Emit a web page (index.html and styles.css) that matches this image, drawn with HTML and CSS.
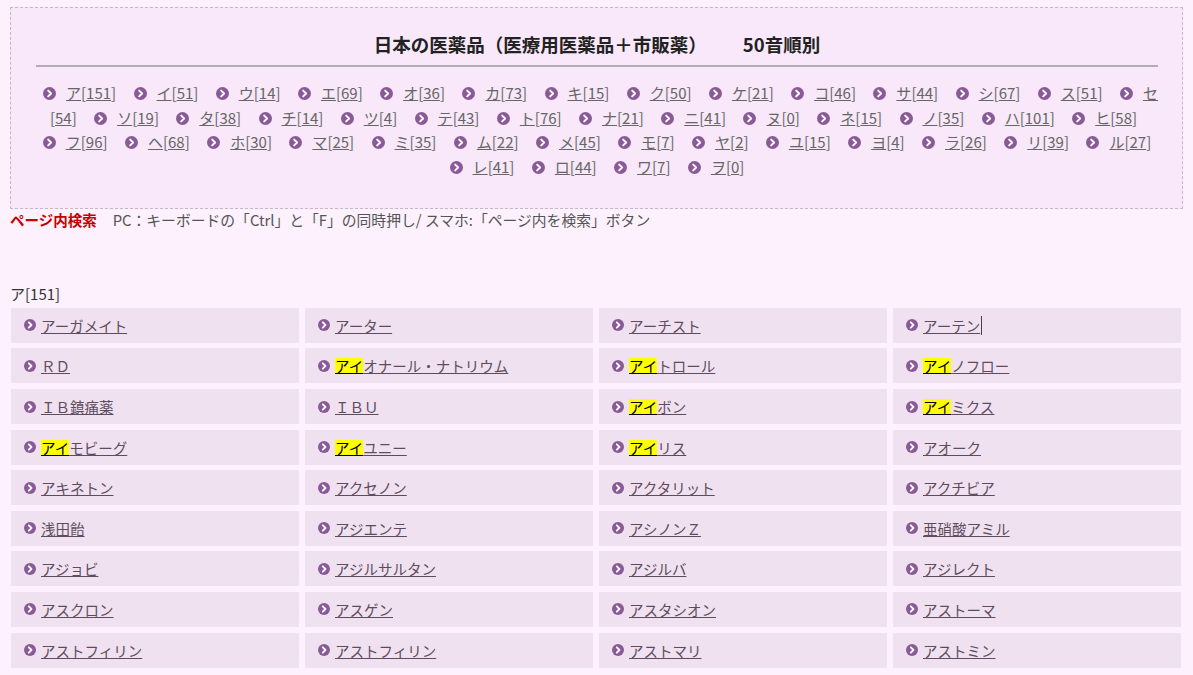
FILE: index.html
```html
<!DOCTYPE html>
<html lang="ja">
<head>
<meta charset="utf-8">
<title>日本の医薬品 50音順別</title>
<link rel="stylesheet" href="styles.css">
</head>
<body>
<div class="page">
  <div class="index-box">
    <h1 class="title">日本の医薬品（医療用医薬品＋市販薬）<span class="title-sub">50音順別</span></h1>
    <div class="nav">
      <span class="ni"><svg viewBox="0 0 13 13"><circle cx="6.5" cy="6.5" r="6.5"/><path d="M5.2 3.6 8.1 6.5 5.2 9.4"/></svg><a href="#">ア</a>[<a href="#">151</a>]</span>
      <span class="ni"><svg viewBox="0 0 13 13"><circle cx="6.5" cy="6.5" r="6.5"/><path d="M5.2 3.6 8.1 6.5 5.2 9.4"/></svg><a href="#">イ</a>[<a href="#">51</a>]</span>
      <span class="ni"><svg viewBox="0 0 13 13"><circle cx="6.5" cy="6.5" r="6.5"/><path d="M5.2 3.6 8.1 6.5 5.2 9.4"/></svg><a href="#">ウ</a>[<a href="#">14</a>]</span>
      <span class="ni"><svg viewBox="0 0 13 13"><circle cx="6.5" cy="6.5" r="6.5"/><path d="M5.2 3.6 8.1 6.5 5.2 9.4"/></svg><a href="#">エ</a>[<a href="#">69</a>]</span>
      <span class="ni"><svg viewBox="0 0 13 13"><circle cx="6.5" cy="6.5" r="6.5"/><path d="M5.2 3.6 8.1 6.5 5.2 9.4"/></svg><a href="#">オ</a>[<a href="#">36</a>]</span>
      <span class="ni"><svg viewBox="0 0 13 13"><circle cx="6.5" cy="6.5" r="6.5"/><path d="M5.2 3.6 8.1 6.5 5.2 9.4"/></svg><a href="#">カ</a>[<a href="#">73</a>]</span>
      <span class="ni"><svg viewBox="0 0 13 13"><circle cx="6.5" cy="6.5" r="6.5"/><path d="M5.2 3.6 8.1 6.5 5.2 9.4"/></svg><a href="#">キ</a>[<a href="#">15</a>]</span>
      <span class="ni"><svg viewBox="0 0 13 13"><circle cx="6.5" cy="6.5" r="6.5"/><path d="M5.2 3.6 8.1 6.5 5.2 9.4"/></svg><a href="#">ク</a>[<a href="#">50</a>]</span>
      <span class="ni"><svg viewBox="0 0 13 13"><circle cx="6.5" cy="6.5" r="6.5"/><path d="M5.2 3.6 8.1 6.5 5.2 9.4"/></svg><a href="#">ケ</a>[<a href="#">21</a>]</span>
      <span class="ni"><svg viewBox="0 0 13 13"><circle cx="6.5" cy="6.5" r="6.5"/><path d="M5.2 3.6 8.1 6.5 5.2 9.4"/></svg><a href="#">コ</a>[<a href="#">46</a>]</span>
      <span class="ni"><svg viewBox="0 0 13 13"><circle cx="6.5" cy="6.5" r="6.5"/><path d="M5.2 3.6 8.1 6.5 5.2 9.4"/></svg><a href="#">サ</a>[<a href="#">44</a>]</span>
      <span class="ni"><svg viewBox="0 0 13 13"><circle cx="6.5" cy="6.5" r="6.5"/><path d="M5.2 3.6 8.1 6.5 5.2 9.4"/></svg><a href="#">シ</a>[<a href="#">67</a>]</span>
      <span class="ni"><svg viewBox="0 0 13 13"><circle cx="6.5" cy="6.5" r="6.5"/><path d="M5.2 3.6 8.1 6.5 5.2 9.4"/></svg><a href="#">ス</a>[<a href="#">51</a>]</span>
      <span class="ni"><svg viewBox="0 0 13 13"><circle cx="6.5" cy="6.5" r="6.5"/><path d="M5.2 3.6 8.1 6.5 5.2 9.4"/></svg><a href="#">セ</a><br>[<a href="#">54</a>]</span>
      <span class="ni"><svg viewBox="0 0 13 13"><circle cx="6.5" cy="6.5" r="6.5"/><path d="M5.2 3.6 8.1 6.5 5.2 9.4"/></svg><a href="#">ソ</a>[<a href="#">19</a>]</span>
      <span class="ni"><svg viewBox="0 0 13 13"><circle cx="6.5" cy="6.5" r="6.5"/><path d="M5.2 3.6 8.1 6.5 5.2 9.4"/></svg><a href="#">タ</a>[<a href="#">38</a>]</span>
      <span class="ni"><svg viewBox="0 0 13 13"><circle cx="6.5" cy="6.5" r="6.5"/><path d="M5.2 3.6 8.1 6.5 5.2 9.4"/></svg><a href="#">チ</a>[<a href="#">14</a>]</span>
      <span class="ni"><svg viewBox="0 0 13 13"><circle cx="6.5" cy="6.5" r="6.5"/><path d="M5.2 3.6 8.1 6.5 5.2 9.4"/></svg><a href="#">ツ</a>[<a href="#">4</a>]</span>
      <span class="ni"><svg viewBox="0 0 13 13"><circle cx="6.5" cy="6.5" r="6.5"/><path d="M5.2 3.6 8.1 6.5 5.2 9.4"/></svg><a href="#">テ</a>[<a href="#">43</a>]</span>
      <span class="ni"><svg viewBox="0 0 13 13"><circle cx="6.5" cy="6.5" r="6.5"/><path d="M5.2 3.6 8.1 6.5 5.2 9.4"/></svg><a href="#">ト</a>[<a href="#">76</a>]</span>
      <span class="ni"><svg viewBox="0 0 13 13"><circle cx="6.5" cy="6.5" r="6.5"/><path d="M5.2 3.6 8.1 6.5 5.2 9.4"/></svg><a href="#">ナ</a>[<a href="#">21</a>]</span>
      <span class="ni"><svg viewBox="0 0 13 13"><circle cx="6.5" cy="6.5" r="6.5"/><path d="M5.2 3.6 8.1 6.5 5.2 9.4"/></svg><a href="#">ニ</a>[<a href="#">41</a>]</span>
      <span class="ni"><svg viewBox="0 0 13 13"><circle cx="6.5" cy="6.5" r="6.5"/><path d="M5.2 3.6 8.1 6.5 5.2 9.4"/></svg><a href="#">ヌ</a>[<a href="#">0</a>]</span>
      <span class="ni"><svg viewBox="0 0 13 13"><circle cx="6.5" cy="6.5" r="6.5"/><path d="M5.2 3.6 8.1 6.5 5.2 9.4"/></svg><a href="#">ネ</a>[<a href="#">15</a>]</span>
      <span class="ni"><svg viewBox="0 0 13 13"><circle cx="6.5" cy="6.5" r="6.5"/><path d="M5.2 3.6 8.1 6.5 5.2 9.4"/></svg><a href="#">ノ</a>[<a href="#">35</a>]</span>
      <span class="ni"><svg viewBox="0 0 13 13"><circle cx="6.5" cy="6.5" r="6.5"/><path d="M5.2 3.6 8.1 6.5 5.2 9.4"/></svg><a href="#">ハ</a>[<a href="#">101</a>]</span>
      <span class="ni"><svg viewBox="0 0 13 13"><circle cx="6.5" cy="6.5" r="6.5"/><path d="M5.2 3.6 8.1 6.5 5.2 9.4"/></svg><a href="#">ヒ</a>[<a href="#">58</a>]</span><br>
      <span class="ni"><svg viewBox="0 0 13 13"><circle cx="6.5" cy="6.5" r="6.5"/><path d="M5.2 3.6 8.1 6.5 5.2 9.4"/></svg><a href="#">フ</a>[<a href="#">96</a>]</span>
      <span class="ni"><svg viewBox="0 0 13 13"><circle cx="6.5" cy="6.5" r="6.5"/><path d="M5.2 3.6 8.1 6.5 5.2 9.4"/></svg><a href="#">ヘ</a>[<a href="#">68</a>]</span>
      <span class="ni"><svg viewBox="0 0 13 13"><circle cx="6.5" cy="6.5" r="6.5"/><path d="M5.2 3.6 8.1 6.5 5.2 9.4"/></svg><a href="#">ホ</a>[<a href="#">30</a>]</span>
      <span class="ni"><svg viewBox="0 0 13 13"><circle cx="6.5" cy="6.5" r="6.5"/><path d="M5.2 3.6 8.1 6.5 5.2 9.4"/></svg><a href="#">マ</a>[<a href="#">25</a>]</span>
      <span class="ni"><svg viewBox="0 0 13 13"><circle cx="6.5" cy="6.5" r="6.5"/><path d="M5.2 3.6 8.1 6.5 5.2 9.4"/></svg><a href="#">ミ</a>[<a href="#">35</a>]</span>
      <span class="ni"><svg viewBox="0 0 13 13"><circle cx="6.5" cy="6.5" r="6.5"/><path d="M5.2 3.6 8.1 6.5 5.2 9.4"/></svg><a href="#">ム</a>[<a href="#">22</a>]</span>
      <span class="ni"><svg viewBox="0 0 13 13"><circle cx="6.5" cy="6.5" r="6.5"/><path d="M5.2 3.6 8.1 6.5 5.2 9.4"/></svg><a href="#">メ</a>[<a href="#">45</a>]</span>
      <span class="ni"><svg viewBox="0 0 13 13"><circle cx="6.5" cy="6.5" r="6.5"/><path d="M5.2 3.6 8.1 6.5 5.2 9.4"/></svg><a href="#">モ</a>[<a href="#">7</a>]</span>
      <span class="ni"><svg viewBox="0 0 13 13"><circle cx="6.5" cy="6.5" r="6.5"/><path d="M5.2 3.6 8.1 6.5 5.2 9.4"/></svg><a href="#">ヤ</a>[<a href="#">2</a>]</span>
      <span class="ni"><svg viewBox="0 0 13 13"><circle cx="6.5" cy="6.5" r="6.5"/><path d="M5.2 3.6 8.1 6.5 5.2 9.4"/></svg><a href="#">ユ</a>[<a href="#">15</a>]</span>
      <span class="ni"><svg viewBox="0 0 13 13"><circle cx="6.5" cy="6.5" r="6.5"/><path d="M5.2 3.6 8.1 6.5 5.2 9.4"/></svg><a href="#">ヨ</a>[<a href="#">4</a>]</span>
      <span class="ni"><svg viewBox="0 0 13 13"><circle cx="6.5" cy="6.5" r="6.5"/><path d="M5.2 3.6 8.1 6.5 5.2 9.4"/></svg><a href="#">ラ</a>[<a href="#">26</a>]</span>
      <span class="ni"><svg viewBox="0 0 13 13"><circle cx="6.5" cy="6.5" r="6.5"/><path d="M5.2 3.6 8.1 6.5 5.2 9.4"/></svg><a href="#">リ</a>[<a href="#">39</a>]</span>
      <span class="ni"><svg viewBox="0 0 13 13"><circle cx="6.5" cy="6.5" r="6.5"/><path d="M5.2 3.6 8.1 6.5 5.2 9.4"/></svg><a href="#">ル</a>[<a href="#">27</a>]</span><br>
      <span class="ni"><svg viewBox="0 0 13 13"><circle cx="6.5" cy="6.5" r="6.5"/><path d="M5.2 3.6 8.1 6.5 5.2 9.4"/></svg><a href="#">レ</a>[<a href="#">41</a>]</span>
      <span class="ni"><svg viewBox="0 0 13 13"><circle cx="6.5" cy="6.5" r="6.5"/><path d="M5.2 3.6 8.1 6.5 5.2 9.4"/></svg><a href="#">ロ</a>[<a href="#">44</a>]</span>
      <span class="ni"><svg viewBox="0 0 13 13"><circle cx="6.5" cy="6.5" r="6.5"/><path d="M5.2 3.6 8.1 6.5 5.2 9.4"/></svg><a href="#">ワ</a>[<a href="#">7</a>]</span>
      <span class="ni"><svg viewBox="0 0 13 13"><circle cx="6.5" cy="6.5" r="6.5"/><path d="M5.2 3.6 8.1 6.5 5.2 9.4"/></svg><a href="#">ヲ</a>[<a href="#">0</a>]</span>
    </div>
  </div>

  <p class="search"><b class="search-label">ページ内検索</b>PC：キーボードの「Ctrl」と「F」の同時押し/ スマホ:「ページ内を検索」ボタン</p>

  <h2 class="sec">ア[151]</h2>

  <div class="grid">
    <div class="cell"><svg viewBox="0 0 13 13"><circle cx="6.5" cy="6.5" r="6.5"/><path d="M5.2 3.6 8.1 6.5 5.2 9.4"/></svg><a href="#">アーガメイト</a></div>
    <div class="cell"><svg viewBox="0 0 13 13"><circle cx="6.5" cy="6.5" r="6.5"/><path d="M5.2 3.6 8.1 6.5 5.2 9.4"/></svg><a href="#">アーター</a></div>
    <div class="cell"><svg viewBox="0 0 13 13"><circle cx="6.5" cy="6.5" r="6.5"/><path d="M5.2 3.6 8.1 6.5 5.2 9.4"/></svg><a href="#">アーチスト</a></div>
    <div class="cell"><svg viewBox="0 0 13 13"><circle cx="6.5" cy="6.5" r="6.5"/><path d="M5.2 3.6 8.1 6.5 5.2 9.4"/></svg><a href="#">アーテン</a><span class="caret"></span></div>

    <div class="cell"><svg viewBox="0 0 13 13"><circle cx="6.5" cy="6.5" r="6.5"/><path d="M5.2 3.6 8.1 6.5 5.2 9.4"/></svg><a href="#">ＲＤ</a></div>
    <div class="cell"><svg viewBox="0 0 13 13"><circle cx="6.5" cy="6.5" r="6.5"/><path d="M5.2 3.6 8.1 6.5 5.2 9.4"/></svg><a href="#"><mark class="hl">アイ</mark>オナール・ナトリウム</a></div>
    <div class="cell"><svg viewBox="0 0 13 13"><circle cx="6.5" cy="6.5" r="6.5"/><path d="M5.2 3.6 8.1 6.5 5.2 9.4"/></svg><a href="#"><mark class="hl">アイ</mark>トロール</a></div>
    <div class="cell"><svg viewBox="0 0 13 13"><circle cx="6.5" cy="6.5" r="6.5"/><path d="M5.2 3.6 8.1 6.5 5.2 9.4"/></svg><a href="#"><mark class="hl">アイ</mark>ノフロー</a></div>

    <div class="cell"><svg viewBox="0 0 13 13"><circle cx="6.5" cy="6.5" r="6.5"/><path d="M5.2 3.6 8.1 6.5 5.2 9.4"/></svg><a href="#">ＩＢ鎮痛薬</a></div>
    <div class="cell"><svg viewBox="0 0 13 13"><circle cx="6.5" cy="6.5" r="6.5"/><path d="M5.2 3.6 8.1 6.5 5.2 9.4"/></svg><a href="#">ＩＢＵ</a></div>
    <div class="cell"><svg viewBox="0 0 13 13"><circle cx="6.5" cy="6.5" r="6.5"/><path d="M5.2 3.6 8.1 6.5 5.2 9.4"/></svg><a href="#"><mark class="hl">アイ</mark>ボン</a></div>
    <div class="cell"><svg viewBox="0 0 13 13"><circle cx="6.5" cy="6.5" r="6.5"/><path d="M5.2 3.6 8.1 6.5 5.2 9.4"/></svg><a href="#"><mark class="hl">アイ</mark>ミクス</a></div>

    <div class="cell"><svg viewBox="0 0 13 13"><circle cx="6.5" cy="6.5" r="6.5"/><path d="M5.2 3.6 8.1 6.5 5.2 9.4"/></svg><a href="#"><mark class="hl">アイ</mark>モビーグ</a></div>
    <div class="cell"><svg viewBox="0 0 13 13"><circle cx="6.5" cy="6.5" r="6.5"/><path d="M5.2 3.6 8.1 6.5 5.2 9.4"/></svg><a href="#"><mark class="hl">アイ</mark>ユニー</a></div>
    <div class="cell"><svg viewBox="0 0 13 13"><circle cx="6.5" cy="6.5" r="6.5"/><path d="M5.2 3.6 8.1 6.5 5.2 9.4"/></svg><a href="#"><mark class="hl">アイ</mark>リス</a></div>
    <div class="cell"><svg viewBox="0 0 13 13"><circle cx="6.5" cy="6.5" r="6.5"/><path d="M5.2 3.6 8.1 6.5 5.2 9.4"/></svg><a href="#">アオーク</a></div>

    <div class="cell"><svg viewBox="0 0 13 13"><circle cx="6.5" cy="6.5" r="6.5"/><path d="M5.2 3.6 8.1 6.5 5.2 9.4"/></svg><a href="#">アキネトン</a></div>
    <div class="cell"><svg viewBox="0 0 13 13"><circle cx="6.5" cy="6.5" r="6.5"/><path d="M5.2 3.6 8.1 6.5 5.2 9.4"/></svg><a href="#">アクセノン</a></div>
    <div class="cell"><svg viewBox="0 0 13 13"><circle cx="6.5" cy="6.5" r="6.5"/><path d="M5.2 3.6 8.1 6.5 5.2 9.4"/></svg><a href="#">アクタリット</a></div>
    <div class="cell"><svg viewBox="0 0 13 13"><circle cx="6.5" cy="6.5" r="6.5"/><path d="M5.2 3.6 8.1 6.5 5.2 9.4"/></svg><a href="#">アクチビア</a></div>

    <div class="cell"><svg viewBox="0 0 13 13"><circle cx="6.5" cy="6.5" r="6.5"/><path d="M5.2 3.6 8.1 6.5 5.2 9.4"/></svg><a href="#">浅田飴</a></div>
    <div class="cell"><svg viewBox="0 0 13 13"><circle cx="6.5" cy="6.5" r="6.5"/><path d="M5.2 3.6 8.1 6.5 5.2 9.4"/></svg><a href="#">アジエンテ</a></div>
    <div class="cell"><svg viewBox="0 0 13 13"><circle cx="6.5" cy="6.5" r="6.5"/><path d="M5.2 3.6 8.1 6.5 5.2 9.4"/></svg><a href="#">アシノンＺ</a></div>
    <div class="cell"><svg viewBox="0 0 13 13"><circle cx="6.5" cy="6.5" r="6.5"/><path d="M5.2 3.6 8.1 6.5 5.2 9.4"/></svg><a href="#">亜硝酸アミル</a></div>

    <div class="cell"><svg viewBox="0 0 13 13"><circle cx="6.5" cy="6.5" r="6.5"/><path d="M5.2 3.6 8.1 6.5 5.2 9.4"/></svg><a href="#">アジョビ</a></div>
    <div class="cell"><svg viewBox="0 0 13 13"><circle cx="6.5" cy="6.5" r="6.5"/><path d="M5.2 3.6 8.1 6.5 5.2 9.4"/></svg><a href="#">アジルサルタン</a></div>
    <div class="cell"><svg viewBox="0 0 13 13"><circle cx="6.5" cy="6.5" r="6.5"/><path d="M5.2 3.6 8.1 6.5 5.2 9.4"/></svg><a href="#">アジルバ</a></div>
    <div class="cell"><svg viewBox="0 0 13 13"><circle cx="6.5" cy="6.5" r="6.5"/><path d="M5.2 3.6 8.1 6.5 5.2 9.4"/></svg><a href="#">アジレクト</a></div>

    <div class="cell"><svg viewBox="0 0 13 13"><circle cx="6.5" cy="6.5" r="6.5"/><path d="M5.2 3.6 8.1 6.5 5.2 9.4"/></svg><a href="#">アスクロン</a></div>
    <div class="cell"><svg viewBox="0 0 13 13"><circle cx="6.5" cy="6.5" r="6.5"/><path d="M5.2 3.6 8.1 6.5 5.2 9.4"/></svg><a href="#">アスゲン</a></div>
    <div class="cell"><svg viewBox="0 0 13 13"><circle cx="6.5" cy="6.5" r="6.5"/><path d="M5.2 3.6 8.1 6.5 5.2 9.4"/></svg><a href="#">アスタシオン</a></div>
    <div class="cell"><svg viewBox="0 0 13 13"><circle cx="6.5" cy="6.5" r="6.5"/><path d="M5.2 3.6 8.1 6.5 5.2 9.4"/></svg><a href="#">アストーマ</a></div>

    <div class="cell"><svg viewBox="0 0 13 13"><circle cx="6.5" cy="6.5" r="6.5"/><path d="M5.2 3.6 8.1 6.5 5.2 9.4"/></svg><a href="#">アストフィリン</a></div>
    <div class="cell"><svg viewBox="0 0 13 13"><circle cx="6.5" cy="6.5" r="6.5"/><path d="M5.2 3.6 8.1 6.5 5.2 9.4"/></svg><a href="#">アストフィリン</a></div>
    <div class="cell"><svg viewBox="0 0 13 13"><circle cx="6.5" cy="6.5" r="6.5"/><path d="M5.2 3.6 8.1 6.5 5.2 9.4"/></svg><a href="#">アストマリ</a></div>
    <div class="cell"><svg viewBox="0 0 13 13"><circle cx="6.5" cy="6.5" r="6.5"/><path d="M5.2 3.6 8.1 6.5 5.2 9.4"/></svg><a href="#">アストミン</a></div>
  </div>
</div>
</body>
</html>
```

FILE: styles.css
```css
html, body {
  margin: 0;
  padding: 0;
}

body {
  background: #fcf1fc;
  font-family: "Noto Sans CJK JP", "Noto Sans", sans-serif;
  color: #555;
}

.page {
  padding: 0 10px;
}

.index-box {
  margin-top: 7px;
  border: 1px dashed #c6b6c6;
  background: #f8e8f9;
  padding: 0 24px 28px 25px;
}

.title {
  margin: 23px 0 0;
  padding-bottom: 8px;
  border-bottom: 2px solid #b5abb5;
  font-size: 18.5px;
  line-height: 26px;
  font-weight: bold;
  text-align: center;
  color: #222;
}

.title-sub {
  margin-left: 36px;
}

.nav {
  margin: 14px -20px 0;
  text-align: center;
  font-size: 15px;
  line-height: 24.7px;
  color: #666;
}

.ni {
  white-space: nowrap;
  margin: 0 7px;
}

.nav a {
  color: #666;
  text-decoration: underline;
}

.ni svg,
.cell svg {
  fill: #8a5a98;
  stroke: none;
}

.ni svg path,
.cell svg path {
  fill: none;
  stroke: #fff;
  stroke-width: 2;
  stroke-linecap: round;
  stroke-linejoin: round;
}

.ni svg {
  width: 13px;
  height: 13px;
  vertical-align: -1px;
  margin-right: 10px;
}

.search {
  margin: 1px 0 0;
  font-size: 14.8px;
  line-height: 20px;
  color: #555;
}

.search-label {
  color: #c40000;
  font-size: 14.5px;
  margin-right: 16px;
}

.sec {
  margin: 54px 0 0;
  font-size: 15px;
  line-height: 20px;
  font-weight: normal;
  color: #333;
}

.grid {
  display: grid;
  grid-template-columns: repeat(4, 288px);
  column-gap: 6px;
  row-gap: 5.6px;
  margin: 4px 0 0 1px;
}

.cell {
  height: 35px;
  background: #f0e1f0;
  display: flex;
  align-items: center;
  padding-left: 13px;
  font-size: 14.5px;
}

.cell svg {
  width: 12px;
  height: 12px;
  margin-right: 5px;
  flex: none;
}

.cell a {
  color: #5e4c5e;
  text-decoration: underline;
}

.hl {
  display: inline-block;
  background: #ffff00;
  color: #000;
  line-height: 16px;
  text-decoration: underline;
}

.caret {
  display: inline-block;
  width: 1px;
  height: 19px;
  background: #444;
  margin-left: 1px;
}
```
